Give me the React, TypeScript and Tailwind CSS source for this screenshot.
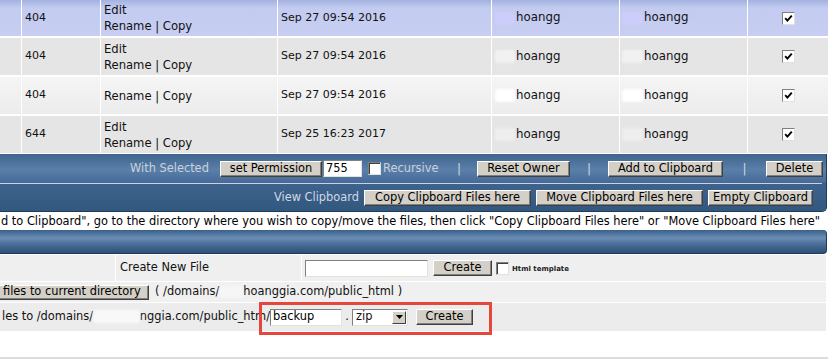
import React from 'react';

const files = [
  { perm: '404', edit: true, date: 'Sep 27 09:54 2016', h: 'h-[36px]', bg: 'bg-[linear-gradient(to_bottom,#a3b2e0,#c3cbf0_22%,#c7cef2)]', blob: 'bg-[#cdcdfc]' },
  { perm: '404', edit: true, date: 'Sep 27 09:54 2016', h: 'h-[37px]', bg: 'bg-[#e5e5e5]', blob: 'bg-[#f1f1f1]' },
  { perm: '404', edit: false, date: 'Sep 27 09:54 2016', h: 'h-[37px]', bg: 'bg-[linear-gradient(to_bottom,#f5f5f5,#ececec)]', blob: 'bg-white' },
  { perm: '644', edit: true, date: 'Sep 25 16:23 2017', h: 'h-[37px]', bg: 'bg-[#e5e5e5]', blob: 'bg-[#eeeeee]' },
];

const Btn = ({ children, className = '' }: { children: React.ReactNode; className?: string }) => (
  <button
    className={`flex shrink-0 items-center justify-center whitespace-nowrap border border-t-white border-l-white border-r-[#404040] border-b-[#404040] bg-[#d4d0c8] text-[11.4px] leading-none text-black shadow-[inset_-1px_-1px_0_#808080] ${className}`}
  >
    {children}
  </button>
);

const Box = ({ checked = false, className = '' }: { checked?: boolean; className?: string }) => (
  <span
    className={`flex h-[13px] w-[13px] shrink-0 items-center justify-center border border-t-[#808080] border-l-[#808080] border-r-[#e0e0e0] border-b-[#e0e0e0] bg-white shadow-[inset_1px_1px_0_#404040] ${className}`}
  >
    {checked && (
      <svg viewBox="0 0 9 9" className="h-[9px] w-[9px]">
        <path d="M1.2 4.2 L3.4 6.6 L7.8 1.6" stroke="#000" strokeWidth="1.9" fill="none" />
      </svg>
    )}
  </span>
);

const Field = ({ value = '', className = '' }: { value?: string; className?: string }) => (
  <span
    className={`flex shrink-0 items-center border border-t-[#808080] border-l-[#808080] border-r-[#e4e2dc] border-b-[#e4e2dc] bg-white pl-[2px] leading-none text-black ${className}`}
  >
    {value}
  </span>
);

const Blob = ({ className = '' }: { className?: string }) => (
  <span className={`inline-block shrink-0 rounded-[3px] blur-[1px] ${className}`} />
);

const Sep = ({ className = '' }: { className?: string }) => (
  <span className={`shrink-0 text-center text-[12px] text-[#cfd8e4] ${className}`}>|</span>
);

export default function App() {
  return (
    <div className="relative h-[359px] w-[828px] overflow-hidden bg-white font-['DejaVu_Sans',Verdana,sans-serif] text-[11.4px] text-[#111]">
      {/* file rows */}
      <div className="grid grid-cols-[21px_78px_176px_213px_127px_127px_80px] gap-x-px gap-y-[2px] bg-white">
        {files.map((f, i) => (
          <React.Fragment key={i}>
            <div className={`${f.h} ${f.bg}`} />
            <div className={`${f.h} ${f.bg} flex items-center pl-[3px] text-[11px]`}>{f.perm}</div>
            <div className={`${f.h} ${f.bg} flex flex-col justify-center pl-[3px] text-[11.6px] leading-4`}>
              {f.edit && <span>Edit</span>}
              <span>Rename | Copy</span>
            </div>
            <div className={`${f.h} ${f.bg} flex items-center pl-[3px] text-[11px]`}>{f.date}</div>
            <div className={`${f.h} ${f.bg} flex items-center pl-[3px] text-[11.8px]`}>
              <Blob className={`h-[13px] w-[20px] ${f.blob}`} />
              <span className="ml-px">hoangg</span>
            </div>
            <div className={`${f.h} ${f.bg} flex items-center pl-[2px] text-[11.8px]`}>
              <Blob className={`h-[13px] w-[21px] ${f.blob}`} />
              <span className="ml-px">hoangg</span>
            </div>
            <div className={`${f.h} ${f.bg} flex items-center justify-center`}>
              <Box checked className="border-[#555] shadow-none" />
            </div>
          </React.Fragment>
        ))}
      </div>

      {/* with selected / clipboard panel */}
      <div className="mt-px mr-px overflow-hidden rounded-br-[5px] border-r border-b border-[#1f3b5a] bg-[#3b618a]">
        <div className="flex h-[29px] items-center bg-[linear-gradient(to_bottom,#3f658f,#5a7fa8_55%,#46699a)]">
          <span className="ml-[130px] w-[90px] shrink-0 whitespace-nowrap text-[#c8d2de]">With Selected</span>
          <Btn className="h-[16px] w-[102px]">set Permission</Btn>
          <Field value="755" className="ml-px h-[17px] w-[39px]" />
          <Box className="ml-[6px]" />
          <span className="ml-[2px] w-[58px] shrink-0 text-[#c8d2de]">Recursive</span>
          <Sep className="w-[36px]" />
          <Btn className="h-[16px] w-[93px]">Reset Owner</Btn>
          <Sep className="w-[38px]" />
          <Btn className="h-[16px] w-[115px]">Add to Clipboard</Btn>
          <Sep className="w-[43px]" />
          <Btn className="h-[16px] w-[57px]">Delete</Btn>
        </div>
        <div className="mr-[4px] h-px bg-[#c9d2dd]" />
        <div className="flex h-[27px] items-center justify-end bg-[linear-gradient(to_bottom,#3d638d,#33587f)] pr-[13px]">
          <span className="mr-[5px] whitespace-nowrap text-[#d0d8e4]">View Clipboard</span>
          <Btn className="h-[16px] w-[167px]">Copy Clipboard Files here</Btn>
          <Btn className="ml-[5px] h-[16px] w-[167px]">Move Clipboard Files here</Btn>
          <Btn className="ml-[5px] h-[16px] w-[105px]">Empty Clipboard</Btn>
        </div>
      </div>

      {/* hint */}
      <div className="h-[18px] overflow-hidden whitespace-nowrap bg-white pl-px text-[11.4px] leading-[18px] text-black">
        d to Clipboard", go to the directory where you wish to copy/move the files, then click "Copy Clipboard Files here" or "Move Clipboard Files here"
      </div>

      {/* section bar */}
      <div className="mr-px h-[24px] rounded-r-[4px] border-r border-b border-[#1f3b5a] bg-[linear-gradient(to_bottom,#3a608a,#6a8db4_35%,#4a6f98_60%,#2c5077)]" />

      {/* create / extract rows */}
      <div className="mt-px flex flex-col gap-px bg-white">
        <div className="mr-[2px] grid h-[26px] grid-cols-[115px_185px_1fr] gap-px">
          <div className="bg-[#efefef]" />
          <div className="flex items-center bg-[#efefef] pl-[4px]">Create New File</div>
          <div className="flex items-center bg-[#efefef] pl-[3px]">
            <Field className="h-[17px] w-[123px]" />
            <Btn className="ml-[5px] h-[16px] w-[59px]">Create</Btn>
            <Box className="ml-[4px]" />
            <span className="ml-[3px] mt-[3px] text-[7px] font-bold text-[#222]">Html template</span>
          </div>
        </div>

        <div className="mr-[2px] flex h-[20px] items-center bg-[#f0f0f0]">
          <Btn className="h-[15px] w-[149px] justify-start border-l-0 pl-[3px]">files to current directory</Btn>
          <span className="ml-[6px] whitespace-nowrap">( /domains/</span>
          <Blob className="h-[12px] w-[24px] bg-[#f6f6f6]" />
          <span className="whitespace-nowrap">hoanggia.com/public_html )</span>
        </div>

        <div className="mr-[2px] flex h-[28px] items-center bg-[#ececec]">
          <span className="flex w-[270px] shrink-0 items-center overflow-hidden whitespace-nowrap pl-[2px]">
            <span>les to /domains/</span>
            <Blob className="h-[13px] min-w-0 flex-1 shrink bg-[#f8f8f8]" />
            <span>nggia.com/public_htm/</span>
          </span>
          <Field value="backup" className="h-[17px] w-[72px]" />
          <span className="w-[10px] shrink-0 text-center">.</span>
          <span className="flex h-[17px] w-[56px] shrink-0 items-center border border-t-[#808080] border-l-[#808080] border-r-[#e4e2dc] border-b-[#e4e2dc] bg-white">
            <span className="flex-1 pl-[3px] leading-none">zip</span>
            <span className="mr-px flex h-[13px] w-[14px] items-center justify-center border border-t-white border-l-white border-r-[#404040] border-b-[#404040] bg-[#d4d0c8]">
              <svg viewBox="0 0 7 4" className="h-[4px] w-[7px]">
                <path d="M0 0 H7 L3.5 4 Z" fill="#000" />
              </svg>
            </span>
          </span>
          <Btn className="ml-[8px] h-[16px] w-[57px]">Create</Btn>
        </div>

        <div className="h-[24px] bg-white" />
        <div className="h-[3px] bg-[#dcdcdc]" />
      </div>

      {/* annotation */}
      <div className="absolute left-[259px] top-[302px] h-[33px] w-[233px] border-[3px] border-[#e5473d]" />
    </div>
  );
}
